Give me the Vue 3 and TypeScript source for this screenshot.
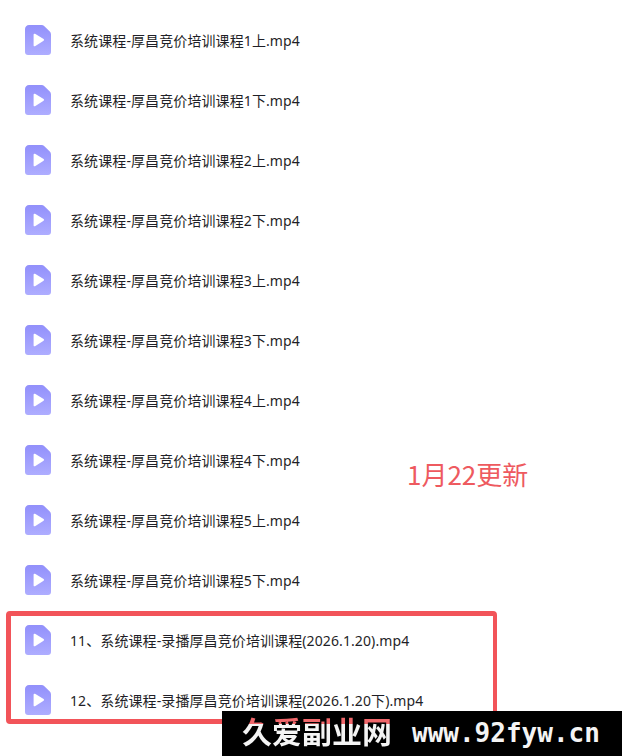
<template>
  <div class="page">
    <ul class="file-list">
      <li v-for="name in files" :key="name" class="file-row">
        <svg class="file-icon" width="26" height="30" viewBox="0 0 26 30">
          <defs>
            <linearGradient :id="gradId" x1="0" y1="0" x2="0" y2="1">
              <stop offset="0" stop-color="#9290fb" />
              <stop offset="1" stop-color="#aeadff" />
            </linearGradient>
          </defs>
          <path
            d="M4 0H16.5C17.6 0 18.6 .4 19.4 1.2L24.8 6.6C25.6 7.4 26 8.4 26 9.5V27C26 28.7 24.7 30 23 30H3C1.3 30 0 28.7 0 27V4C0 1.8 1.8 0 4 0Z"
            :fill="`url(#${gradId})`"
          />
          <path d="M8.6 9.6C8.6 8.8 9.4 8.4 10 8.8L18.6 14.1C19.2 14.5 19.2 15.4 18.6 15.8L10 21.2C9.4 21.6 8.6 21.2 8.6 20.4Z" fill="#fff" />
        </svg>
        <span class="file-name">{{ name }}</span>
      </li>
    </ul>

    <div class="note">1月22更新</div>
    <div class="highlight"></div>
    <div class="watermark">
      <span class="wm-cn">久爱副业网</span>
      <span class="wm-url">www.92fyw.cn</span>
    </div>
  </div>
</template>

<script setup lang="ts">
const gradId = 'video-file-grad'

const files: string[] = []
for (const n of [1, 2, 3, 4, 5]) {
  files.push(`系统课程-厚昌竞价培训课程${n}上.mp4`)
  files.push(`系统课程-厚昌竞价培训课程${n}下.mp4`)
}
files.push('11、系统课程-录播厚昌竞价培训课程(2026.1.20).mp4')
files.push('12、系统课程-录播厚昌竞价培训课程(2026.1.20下).mp4')
</script>

<style>
html,
body {
  margin: 0;
  background: #fff;
}
</style>

<style scoped>
.page {
  position: relative;
  width: 622px;
  height: 756px;
  overflow: hidden;
  background: #fff;
  font-family: "Noto Sans", "Noto Sans CJK SC", sans-serif;
}

.file-list {
  list-style: none;
  margin: 0;
  padding: 10px 0 0 25px;
}

.file-row {
  display: flex;
  align-items: center;
  gap: 19px;
  height: 60px;
}

.file-icon {
  flex: none;
}

.file-name {
  font-size: 14px;
  letter-spacing: 0.1px;
  color: #1f1f27;
  white-space: nowrap;
}

.note {
  position: absolute;
  left: 407px;
  top: 456px;
  font-family: "Noto Sans CJK SC", sans-serif;
  font-size: 26px;
  line-height: 36px;
  color: #ee5a5f;
}

.highlight {
  position: absolute;
  left: 6px;
  top: 611px;
  width: 482px;
  height: 103px;
  border-style: solid;
  border-color: #f25459;
  border-width: 5px 4px 5px 5px;
  border-radius: 4px;
}

.watermark {
  position: absolute;
  left: 222px;
  top: 711px;
  width: 400px;
  height: 45px;
  display: flex;
  align-items: center;
  gap: 20px;
  padding-left: 20px;
  box-sizing: border-box;
  background: #000;
  color: #f4f4f4;
  font-weight: 700;
  white-space: nowrap;
}

/* the red frame shows through the top of the watermark glyphs */
.wm-cn {
  margin-bottom: 6px;
  font-size: 30px;
  line-height: 45px;
  font-family: "Noto Sans CJK SC", sans-serif;
  background: linear-gradient(#f0676b 0 16px, #f4f4f4 16px);
  -webkit-background-clip: text;
  background-clip: text;
  color: transparent;
}

.wm-url {
  font-family: "DejaVu Sans Mono", "Liberation Mono", monospace;
  font-size: 26px;
  line-height: 45px;
}
</style>
